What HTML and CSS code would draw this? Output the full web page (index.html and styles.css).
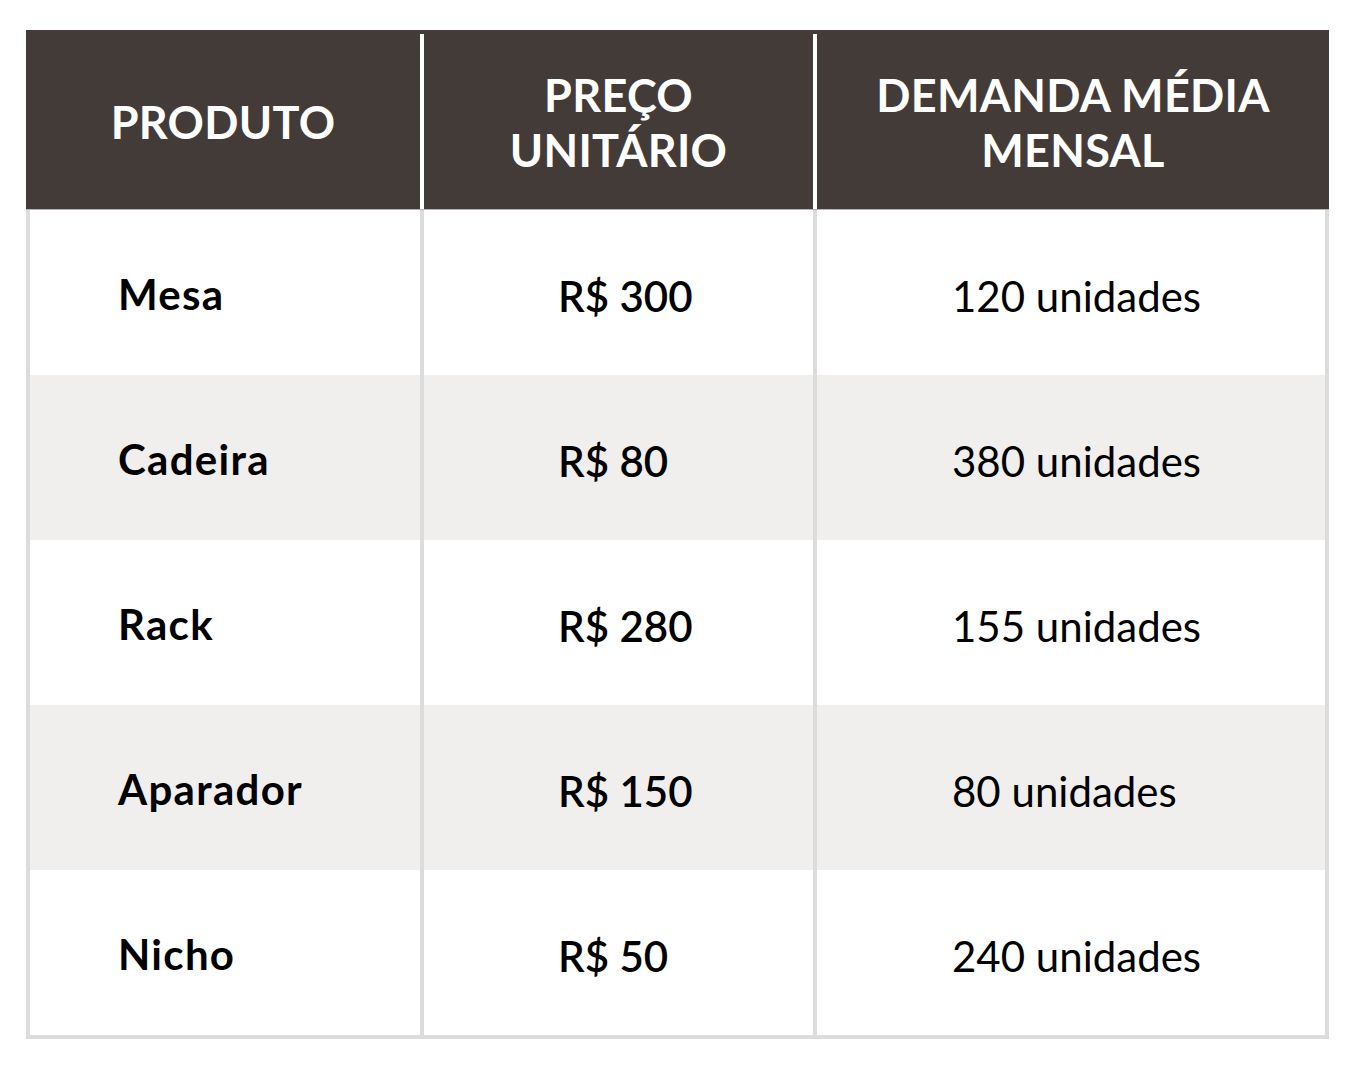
FILE: index.html
```html
<!DOCTYPE html>
<html lang="pt-BR">
<head>
<meta charset="utf-8">
<title>Tabela de produtos</title>
<link rel="stylesheet" href="styles.css">
</head>
<body>
<div class="table">
  <div class="head">
    <div class="hcell">PRODUTO</div>
    <div class="hcell hsep">PREÇO<br>UNITÁRIO</div>
    <div class="hcell hsep">DEMANDA MÉDIA<br>MENSAL</div>
  </div>
  <div class="body">
    <div class="row">
      <div class="cell name">Mesa</div>
      <div class="cell price">R$ 300</div>
      <div class="cell qty">120 unidades</div>
    </div>
    <div class="row alt">
      <div class="cell name">Cadeira</div>
      <div class="cell price">R$ 80</div>
      <div class="cell qty">380 unidades</div>
    </div>
    <div class="row">
      <div class="cell name">Rack</div>
      <div class="cell price">R$ 280</div>
      <div class="cell qty">155 unidades</div>
    </div>
    <div class="row alt">
      <div class="cell name">Aparador</div>
      <div class="cell price">R$ 150</div>
      <div class="cell qty">80 unidades</div>
    </div>
    <div class="row">
      <div class="cell name">Nicho</div>
      <div class="cell price">R$ 50</div>
      <div class="cell qty">240 unidades</div>
    </div>
  </div>
</div>
</body>
</html>
```

FILE: styles.css
```css
html, body {
  margin: 0;
  padding: 0;
  background: #ffffff;
}

body {
  font-family: "Lato", "Liberation Sans", sans-serif;
  color: #000000;
}

.table {
  width: 1303px;
  margin: 30px 0 0 26px;
}

.head {
  display: grid;
  grid-template-columns: 394px 393px 516px;
  background: #433b38;
  padding-top: 4px;
  height: 175px;
  border-bottom: 1px solid #b8b5b3;
}

.hcell {
  box-sizing: border-box;
  display: flex;
  align-items: center;
  justify-content: center;
  text-align: center;
  color: #ffffff;
  font-weight: 700;
  font-size: 45px;
  line-height: 55px;
  letter-spacing: 0.3px;
  padding-top: 2px;
}

.hsep {
  border-left: 4px solid #ffffff;
}

.body {
  border: 4px solid #dcdcdc;
  border-top: none;
}

.row {
  display: grid;
  grid-template-columns: 390px 393px 512px;
  height: 165px;
}

.row.alt {
  background: #f0efed;
}

.cell {
  box-sizing: border-box;
  display: flex;
  align-items: center;
  font-size: 42px;
}

.name {
  padding-left: 88px;
  font-weight: 700;
  letter-spacing: 1.3px;
  padding-top: 2px;
}

.price {
  border-left: 4px solid #dcdcdc;
  padding-left: 134px;
  font-weight: 600;
  padding-top: 6px;
}

.qty {
  border-left: 4px solid #dcdcdc;
  padding-left: 135px;
  font-weight: 400;
  padding-top: 6px;
}
```
